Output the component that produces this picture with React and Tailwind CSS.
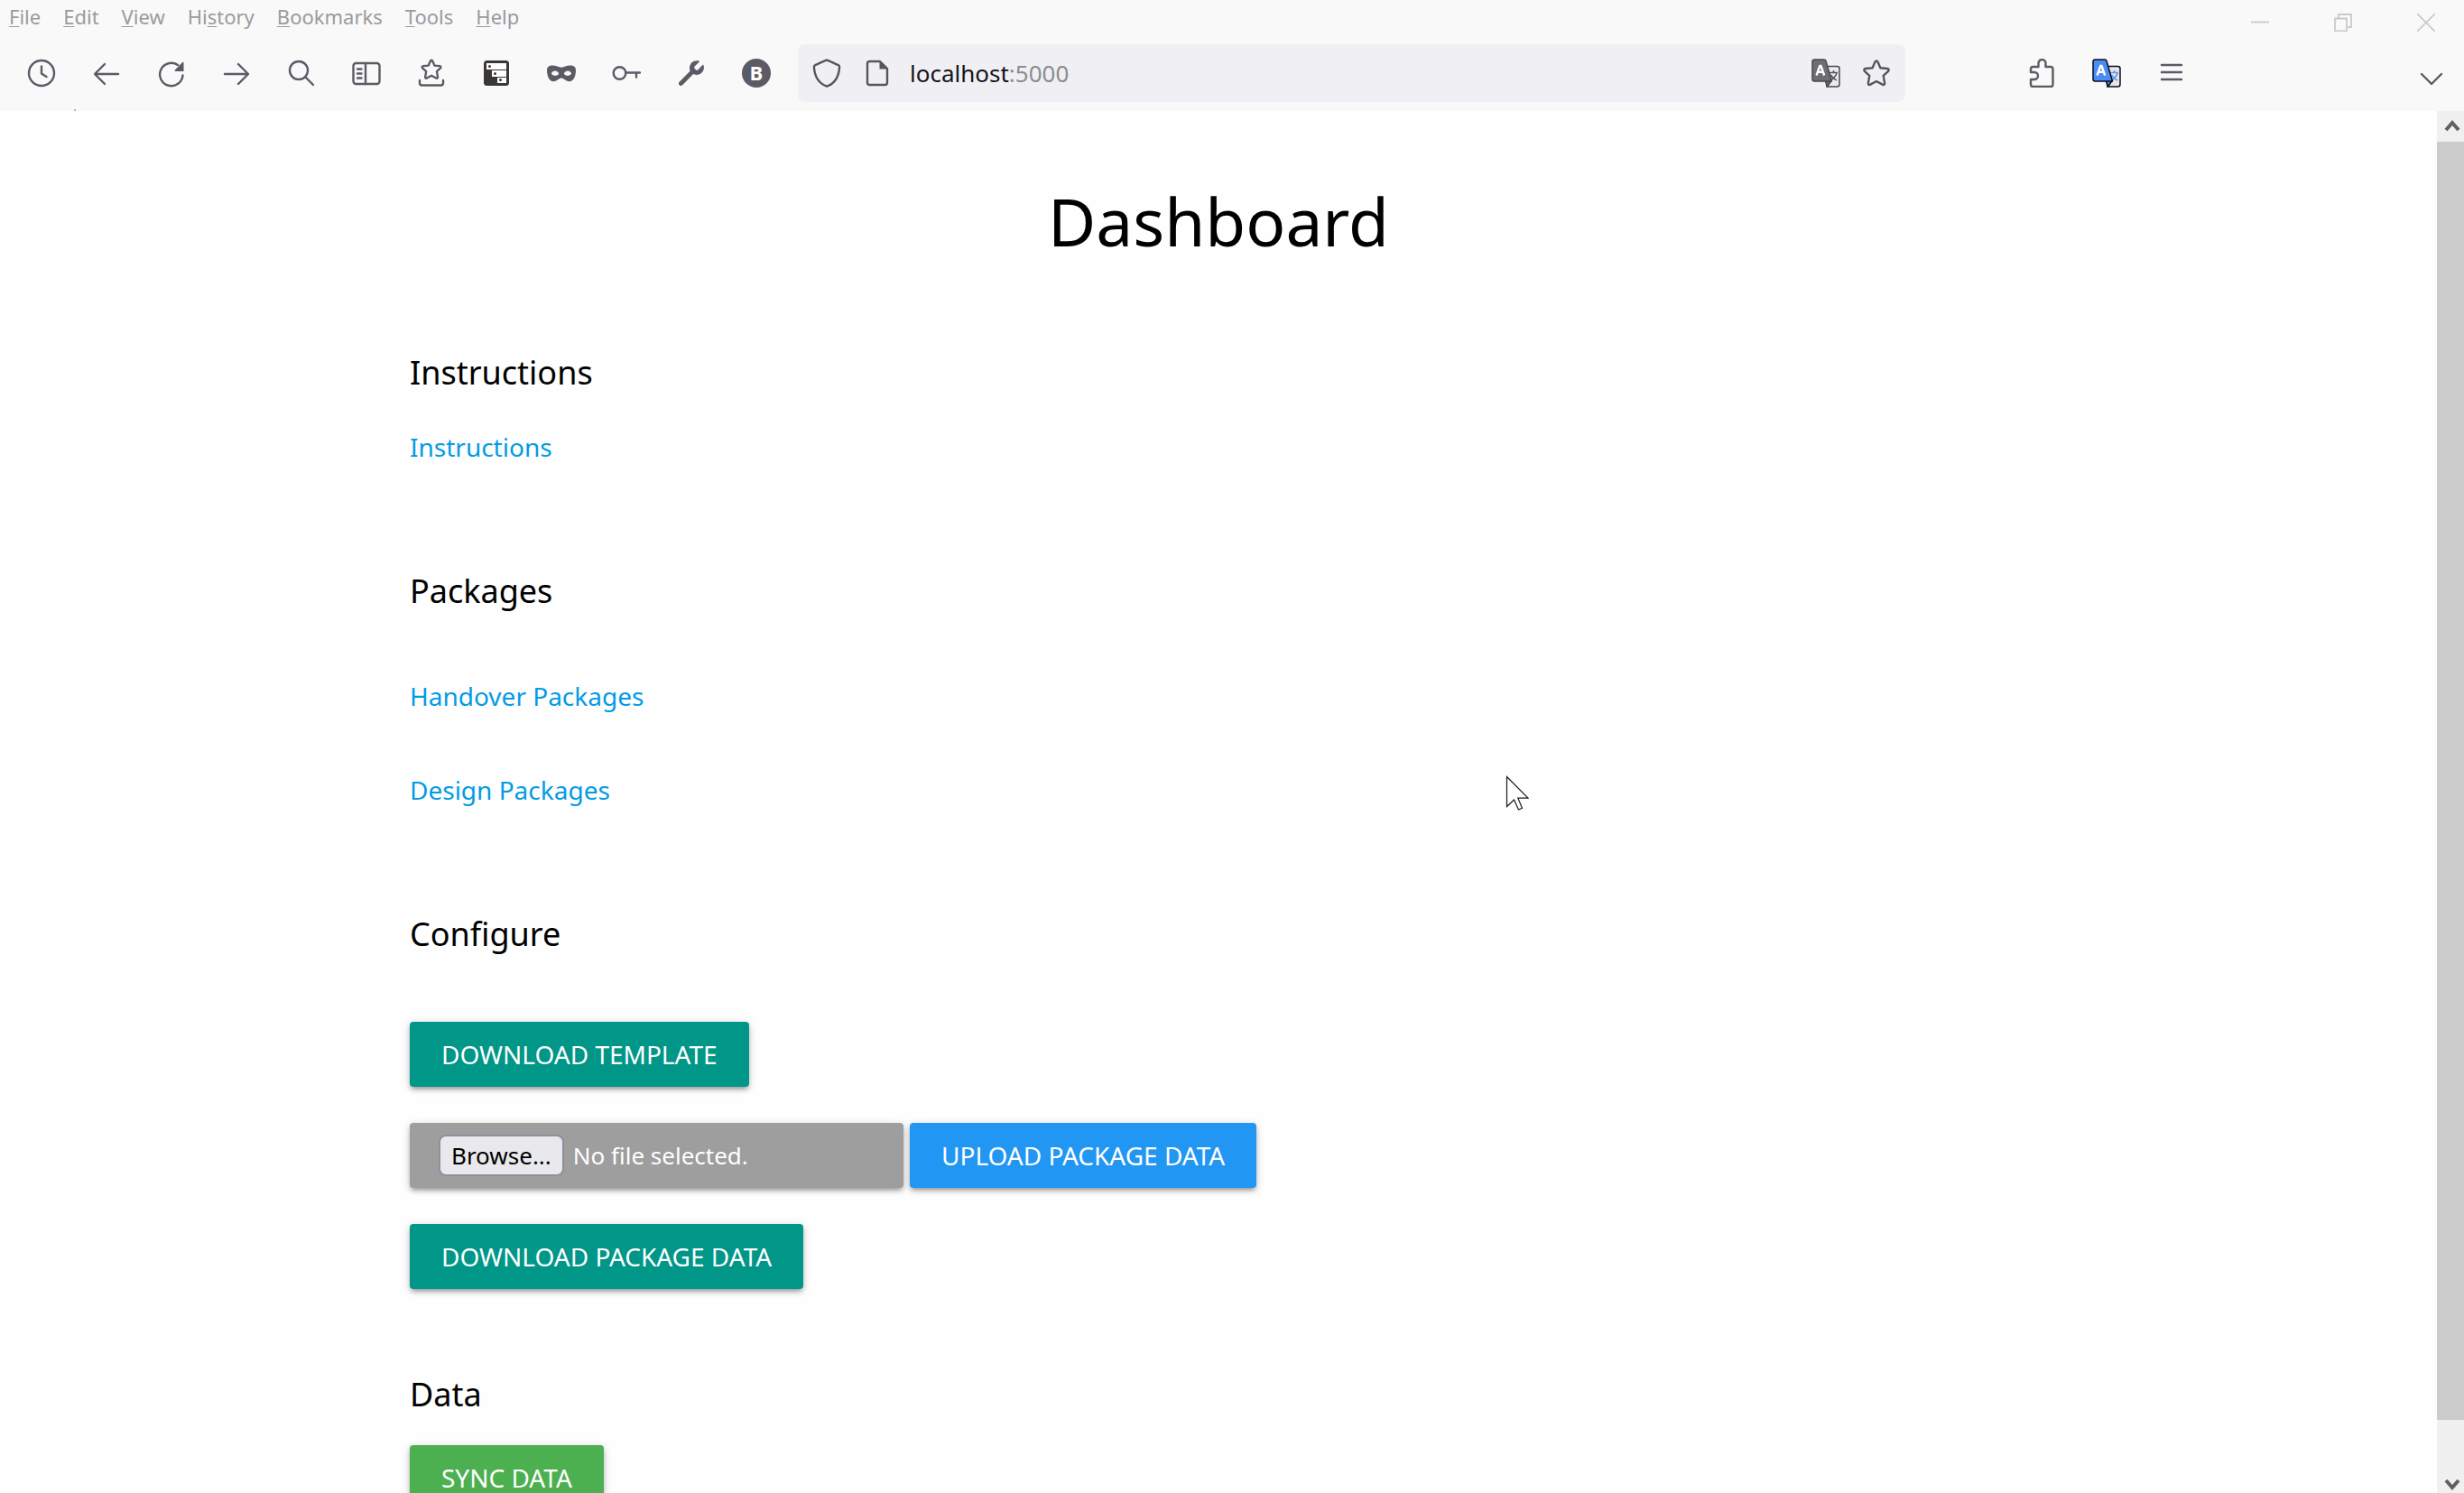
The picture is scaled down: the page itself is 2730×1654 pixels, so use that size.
import React from "react";

const stroke = {
  fill: "none",
  stroke: "currentColor",
  strokeWidth: 2.4,
  strokeLinecap: "round",
  strokeLinejoin: "round",
};

function Icon({ children, className = "text-[#5b5b66]" }) {
  return (
    <svg viewBox="0 0 32 32" className={"size-8 shrink-0 " + className} aria-hidden="true">
      {children}
    </svg>
  );
}

function ToolButton({ label, children, className = "" }) {
  return (
    <button type="button" aria-label={label} className={"block shrink-0 " + className}>
      {children}
    </button>
  );
}

const starPath =
  "M16 2.5c.7 0 1.2.4 1.5 1l2.9 6.7 7.7.8c1.6.2 2.1 1.8 1 2.9l-5.400 5 1.400 8c.3 1.600-1 2.500-2.400 1.700L16 25l-6.700 3.600c-1.400.8-2.700-.1-2.400-1.700l1.400-8-5.400-5c-1.100-1.100-.6-2.700 1-2.900l7.700-.8 2.900-6.700c.3-.6.8-1 1.500-1z";

function TranslateIcon({ front, edge, back, ink }) {
  return (
    <Icon>
      <path d="M14 8.500h14.500q2.500 0 2.500 2.500v17.500q0 2.500-2.500 2.500H17z" fill={back} stroke={edge} strokeWidth="1.500" />
      <path d="M15.500 24.500h6.500L17.500 31z" fill={front} stroke={edge} strokeWidth="1.500" strokeLinejoin="round" />
      <path d="M20 15.500h9M24.500 13v2.500M28 16c-1 3.500-3.500 6-6.500 8M21.500 18c1.500 2.800 3.500 4.500 6.500 6" fill="none" stroke={ink} strokeWidth="1.600" />
      <path d="M3.500 1H14q1.500 0 2 1.500L22.500 25H3.500Q1 25 1 22.500v-19Q1 1 3.500 1z" fill={front} stroke={edge} strokeWidth="1.500" strokeLinejoin="round" />
      <path d="M5.500 18.500L9.300 8h1.200l3.700 10.500M7 14.800h6" fill="none" stroke="#fff" strokeWidth="2.400" />
    </Icon>
  );
}

const tools = [
  ["History", <Icon><circle cx="16" cy="16" r="14" {...stroke} /><path d="M16 8.500v8l5.500 3.500" {...stroke} /></Icon>],
  ["Back", <Icon><path d="M29 17H3.500M14 6L3 17l11 11" {...stroke} /></Icon>],
  ["Reload", <Icon><path d="M28.500 18.500A12.700 12.700 0 1 1 23 7" {...stroke} /><path d="M29.500 4.500v9.500h-9c-1 0-1.200-.8-.6-1.400l8-8.400c.6-.6 1.600-.5 1.600.3z" fill="currentColor" /></Icon>],
  ["Forward", <Icon><path d="M3 17h25.500M18 6l11 11-11 11" {...stroke} /></Icon>],
  ["Search", <Icon><circle cx="13" cy="13" r="10" {...stroke} /><path d="M20.500 20.500L29 29" {...stroke} /></Icon>],
  ["Sidebar", <Icon><rect x="1.500" y="5" width="29" height="23" rx="3" {...stroke} /><path d="M15 5v23M6 11.500h4.500M6 16.500h4.500M6 21.500h4.500" {...stroke} /></Icon>],
  ["Bookmarks", <Icon><g transform="translate(3.900 -.2) scale(.76)"><path d={starPath} {...stroke} strokeWidth="3.100" /></g><path d="M3 24v3q0 2.500 2.500 2.500h21q2.500 0 2.500-2.500v-3" {...stroke} /></Icon>],
  ["Downloads", <Icon className="text-[#3b3735]"><rect x="2" y="2" width="28" height="28" rx="3.500" fill="currentColor" /><path d="M5 5h22v7H5zM11 13h16v7H11zM17 21h10v6H17z" fill="#fff" /><g fill="currentColor"><circle cx="8.500" cy="8.500" r="1.500" /><circle cx="14.500" cy="16.500" r="1.500" /><circle cx="20.500" cy="23.500" r="1.500" /></g></Icon>],
  ["Private window", <Icon><path fillRule="evenodd" fill="currentColor" d="M0 12.500C0 9 2.500 7.500 6 7.500c4.500 0 7 2.200 10 2.200s5.500-2.200 10-2.200c3.500 0 6 1.500 6 5 0 8-3 12.700-7.200 12.700-4.300 0-5.800-3.700-8.800-3.700s-4.500 3.700-8.800 3.700C3 25.200 0 20.500 0 12.500zM4.800 16.500c1 1.600 2.700 2.300 4.400 2.300s3.200-.8 4.100-2.300c-1-1.800-2.600-3-4.400-3s-3.200 1-4.100 3zm13.900 0c.9 1.500 2.400 2.300 4.100 2.300s3.400-.7 4.400-2.300c-.9-2-2.300-3-4.100-3s-3.400 1.200-4.400 3z" /></Icon>],
  ["Passwords", <Icon><circle cx="8.500" cy="16" r="6.800" {...stroke} /><path d="M15.500 15.500H31M27 15.500v5" {...stroke} /></Icon>],
  ["Developer tools", <Icon><path fill="currentColor" d="M24.500 2.500c-5.500-1.500-10.500 2-10.500 8 0 1.200.2 2.200.6 3.200L2.700 25.800c-1 1-1 2.500-.1 3.500s2.500.9 3.500-.1l12-12.100c1 .5 2.200.8 3.500.8 5.700 0 9.400-5 8-10.500-.2-.6-.8-.7-1.200-.3l-5 5.100c-.7.700-1.700.7-2.400 0l-1.300-1.300c-.7-.7-.7-1.700 0-2.400l5.100-5c.4-.4.200-.9-.3-1z" /></Icon>],
  ["Account", <Icon><circle cx="16" cy="16" r="16" fill="currentColor" /><text x="16" y="24" textAnchor="middle" fontFamily="Open Sans, sans-serif" fontWeight="700" fontSize="22" fill="#fff">B</text></Icon>],
];

const menus = [
  ["", "F", "ile"],
  ["", "E", "dit"],
  ["", "V", "iew"],
  ["Hi", "s", "tory"],
  ["", "B", "ookmarks"],
  ["", "T", "ools"],
  ["", "H", "elp"],
];

function BrowserChrome() {
  return (
    <header className="shrink-0 bg-[#f9f9f9]">
      <div className="flex h-[39px] items-start justify-between pl-[10px] pr-8 text-[#9a9a9f]">
        <nav className="flex h-[35px] items-center gap-[25px] text-[22px] leading-8">
          {menus.map(([before, key, after]) => (
            <button type="button" key={key + after}>
              {before}
              <span className="underline decoration-1 underline-offset-2">{key}</span>
              {after}
            </button>
          ))}
        </nav>
        <div className="flex gap-[72px] pt-[15px] text-[#cacaca]">
          {[
            ["Minimize", "M0 9.500h20"],
            ["Restore", "M1 5.500h13v14H1zM5 5V1h14v14h-4"],
            ["Close", "M0 0l20 20M20 0L0 20"],
          ].map(([label, d]) => (
            <ToolButton key={label} label={label}>
              <svg viewBox="0 0 20 20" className="size-5" fill="none" stroke="currentColor" strokeWidth="1.800">
                <path d={d} />
              </svg>
            </ToolButton>
          ))}
        </div>
      </div>
      <div className="flex h-[84px] items-center pl-[30px] pr-5">
        <div className="flex gap-10 pr-[30px]">
          {tools.map(([label, icon]) => (
            <ToolButton key={label} label={label}>{icon}</ToolButton>
          ))}
        </div>
        <div className="flex h-16 min-w-0 flex-1 items-center rounded-lg bg-[#f0f0f4] px-4">
          <Icon className="text-[#55555c]">
            <path d="M16 1.500c.7 0 9.500 4.200 12.500 5.400 1.200.5 1.700 1 1.600 2.400C29.500 19 26 27 16 30.700 6 27 2.500 19 1.900 9.300c-.1-1.400.4-1.900 1.600-2.400C6.500 5.700 15.300 1.500 16 1.500z" {...stroke} />
          </Icon>
          <Icon className="ml-6 text-[#55555c]">
            <path d="M7.500 3H19l8 8v15.500q0 2.500-2.500 2.500h-17Q5 29 5 26.500v-21Q5 3 7.500 3z" {...stroke} />
            <path d="M18.500 3v8.500H28z" fill="currentColor" />
          </Icon>
          <label className="ml-5 flex min-w-0 flex-1 items-center text-[26px] leading-8">
            <span className="text-[#15141a]">localhost</span>
            <span className="text-[#8c8c92]">:5000</span>
            <input aria-label="Address" className="min-w-0 flex-1 bg-transparent outline-none" />
          </label>
          <div className="flex gap-6">
            <ToolButton label="Translate page">
              <TranslateIcon front="#6e6d74" edge="#48474d" back="#ececf0" ink="#55545a" />
            </ToolButton>
            <ToolButton label="Bookmark this page">
              <Icon className="text-[#55555c]"><path d={starPath} {...stroke} /></Icon>
            </ToolButton>
          </div>
        </div>
        <div className="flex gap-10 pl-[135px] pr-64">
          <ToolButton label="Extensions">
            <Icon>
              <path d="M12.500 9V5a4 4 0 0 1 8 0v4h5.500q2.500 0 2.500 2.500v17q0 2.500-2.500 2.500H6.500Q4 31 4 28.500V23h4a4 4 0 0 0 0-8H4v-3.500Q4 9 6.500 9z" {...stroke} />
            </Icon>
          </ToolButton>
          <ToolButton label="Translate">
            <TranslateIcon front="#4a8cf5" edge="#0b0f1c" back="#e6e6e6" ink="#5b97ee" />
          </ToolButton>
          <ToolButton label="Menu">
            <Icon><path d="M5 7h22M5 15h22M5 23h22" {...stroke} /></Icon>
          </ToolButton>
        </div>
        <ToolButton label="List all tabs">
          <Icon><path d="M5 17l11 11 11-11" {...stroke} /></Icon>
        </ToolButton>
      </div>
    </header>
  );
}

function Scrollbar() {
  return (
    <div className="flex w-[30px] shrink-0 flex-col bg-[#f0f0f0] text-[#606060]" aria-hidden="true">
      <svg viewBox="0 0 30 34" className="h-[34px] w-[30px]">
        <path d="M10 21l7-8 7 8" fill="none" stroke="currentColor" strokeWidth="4" />
      </svg>
      <div className="grow-[30] bg-[#cbcbcb]" />
      <div className="grow" />
      <svg viewBox="0 0 30 34" className="h-[34px] w-[30px]">
        <path d="M10 20l7 8 7-8" fill="none" stroke="currentColor" strokeWidth="4" />
      </svg>
    </div>
  );
}

const raised = "rounded-[4px] shadow-[0_4px_4px_0_rgba(0,0,0,0.14),0_6px_2px_-4px_rgba(0,0,0,0.12),0_2px_10px_0_rgba(0,0,0,0.2)]";

function ActionButton({ children, className }) {
  return (
    <button type="button" className={"h-[72px] whitespace-nowrap px-[35px] text-[28px] leading-8 text-white uppercase " + raised + " " + className}>
      {children}
    </button>
  );
}

function Heading({ children }) {
  return <h2 className="text-[36px] leading-10 font-normal">{children}</h2>;
}

function TextLink({ children }) {
  return (
    <a href="#" className="text-[28px] leading-8 text-[#039be5]">
      {children}
    </a>
  );
}

export default function App() {
  return (
    <div className="relative flex h-screen flex-col overflow-hidden bg-[#fefefe] font-['Noto_Sans','Open_Sans',sans-serif] text-black">
      <BrowserChrome />
      <div className="flex min-h-0 flex-1">
        <main className="min-w-0 flex-1 overflow-hidden">
          <div className="mx-auto max-w-[1792px] pt-[82px]">
            <h1 className="text-center text-[73px] leading-20 font-normal">Dashboard</h1>
            <section className="mt-[108px] flex flex-col items-start gap-[46px]">
              <Heading>Instructions</Heading>
              <TextLink>Instructions</TextLink>
            </section>
            <section className="mt-[124px] flex flex-col items-start">
              <Heading>Packages</Heading>
              <div className="mt-20 flex flex-col items-start gap-[72px]">
                <TextLink>Handover Packages</TextLink>
                <TextLink>Design Packages</TextLink>
              </div>
            </section>
            <section className="mt-[124px] flex flex-col items-start">
              <Heading>Configure</Heading>
              <div className="mt-[77px] flex flex-col items-start gap-10">
                <ActionButton className="bg-[#009688]">Download template</ActionButton>
                <div className="flex gap-[7px]">
                  <label className={"flex h-[72px] w-[547px] items-center bg-[#9e9e9e] px-8 text-[26px] leading-8 text-white " + raised}>
                    <input type="file" className="sr-only" />
                    <span className="rounded-lg border-2 border-[#8f8f9d] bg-[#e9e9ed] px-3 py-[5px] text-black">Browse...</span>
                    <span className="ml-[10px]">No file selected.</span>
                  </label>
                  <ActionButton className="bg-[#2196f3]">Upload package data</ActionButton>
                </div>
                <ActionButton className="bg-[#009688]">Download package data</ActionButton>
              </div>
            </section>
            <section className="mt-[97px] flex flex-col items-start gap-9">
              <Heading>Data</Heading>
              <ActionButton className="bg-[#4caf50]">Sync data</ActionButton>
            </section>
          </div>
        </main>
        <Scrollbar />
      </div>
      <span className="absolute left-[82px] top-[121px] size-0.5 bg-[#b5b5b5]" aria-hidden="true" />
      <svg viewBox="0 0 26 40" className="absolute left-[1668px] top-[859px] h-10 w-[26px]" aria-hidden="true">
        <path d="M1.500 1.500v33l8-7.500 5 11 4-1.800-4.700-11h11.200z" fill="#fff" stroke="#1a1a1a" strokeWidth="1.200" />
      </svg>
    </div>
  );
}
